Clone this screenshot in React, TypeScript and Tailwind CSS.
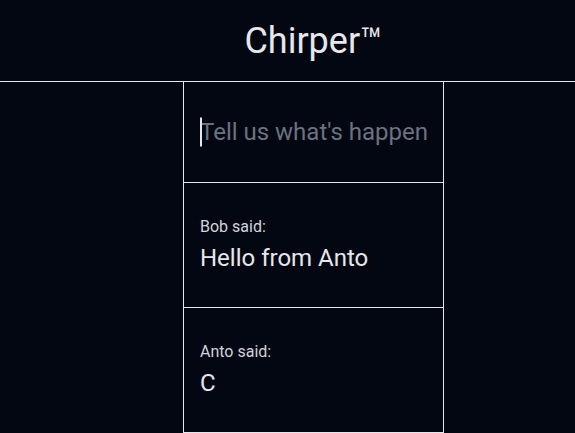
import { useEffect, useRef, useState } from 'react'

type Chirp = { author: string; text: string }

const chirps: Chirp[] = [
    { author: 'Bob', text: 'Hello from Anto' },
    { author: 'Anto', text: 'C' },
]

export default function App() {
    const [draft, setDraft] = useState('')
    const inputRef = useRef<HTMLInputElement>(null)

    useEffect(() => {
        inputRef.current?.focus()
    }, [])

    const empty = draft === ''

    return (
        <div className="min-h-screen bg-gray-950 text-gray-200 font-['Roboto',sans-serif] overflow-hidden">
            {/* Header */}
            <header className="h-[82px] border-b border-gray-200">
                <div className="ml-[183px] w-[261px] h-[81px] flex items-center justify-center">
                    <h1 className="text-4xl">Chirper™</h1>
                </div>
            </header>

            {/* Feed column */}
            <main className="ml-[183px] w-[261px] border-x border-gray-200">
                <div className="h-[101px] px-4 flex items-center border-b border-gray-200">
                    <div className="relative w-full">
                        <input
                            ref={inputRef}
                            autoFocus
                            value={draft}
                            onChange={(e) => setDraft(e.target.value)}
                            placeholder="Tell us what's happening?"
                            className={`w-full bg-transparent text-2xl outline-none placeholder:text-[#6b7280] ${empty ? 'caret-transparent' : 'caret-gray-200'}`}
                        />
                        {empty && (
                            <span className="pointer-events-none absolute left-0 top-1/2 -translate-y-1/2 h-[29px] w-[2px] bg-gray-200" />
                        )}
                    </div>
                </div>

                {chirps.map((chirp) => (
                    <div key={chirp.author + chirp.text} className="px-4 pt-8 pb-[33px] border-b border-gray-200">
                        <p className="text-base text-gray-300">{chirp.author} said:</p>
                        <p className="mt-[3px] text-2xl">{chirp.text}</p>
                    </div>
                ))}
            </main>
        </div>
    )
}
